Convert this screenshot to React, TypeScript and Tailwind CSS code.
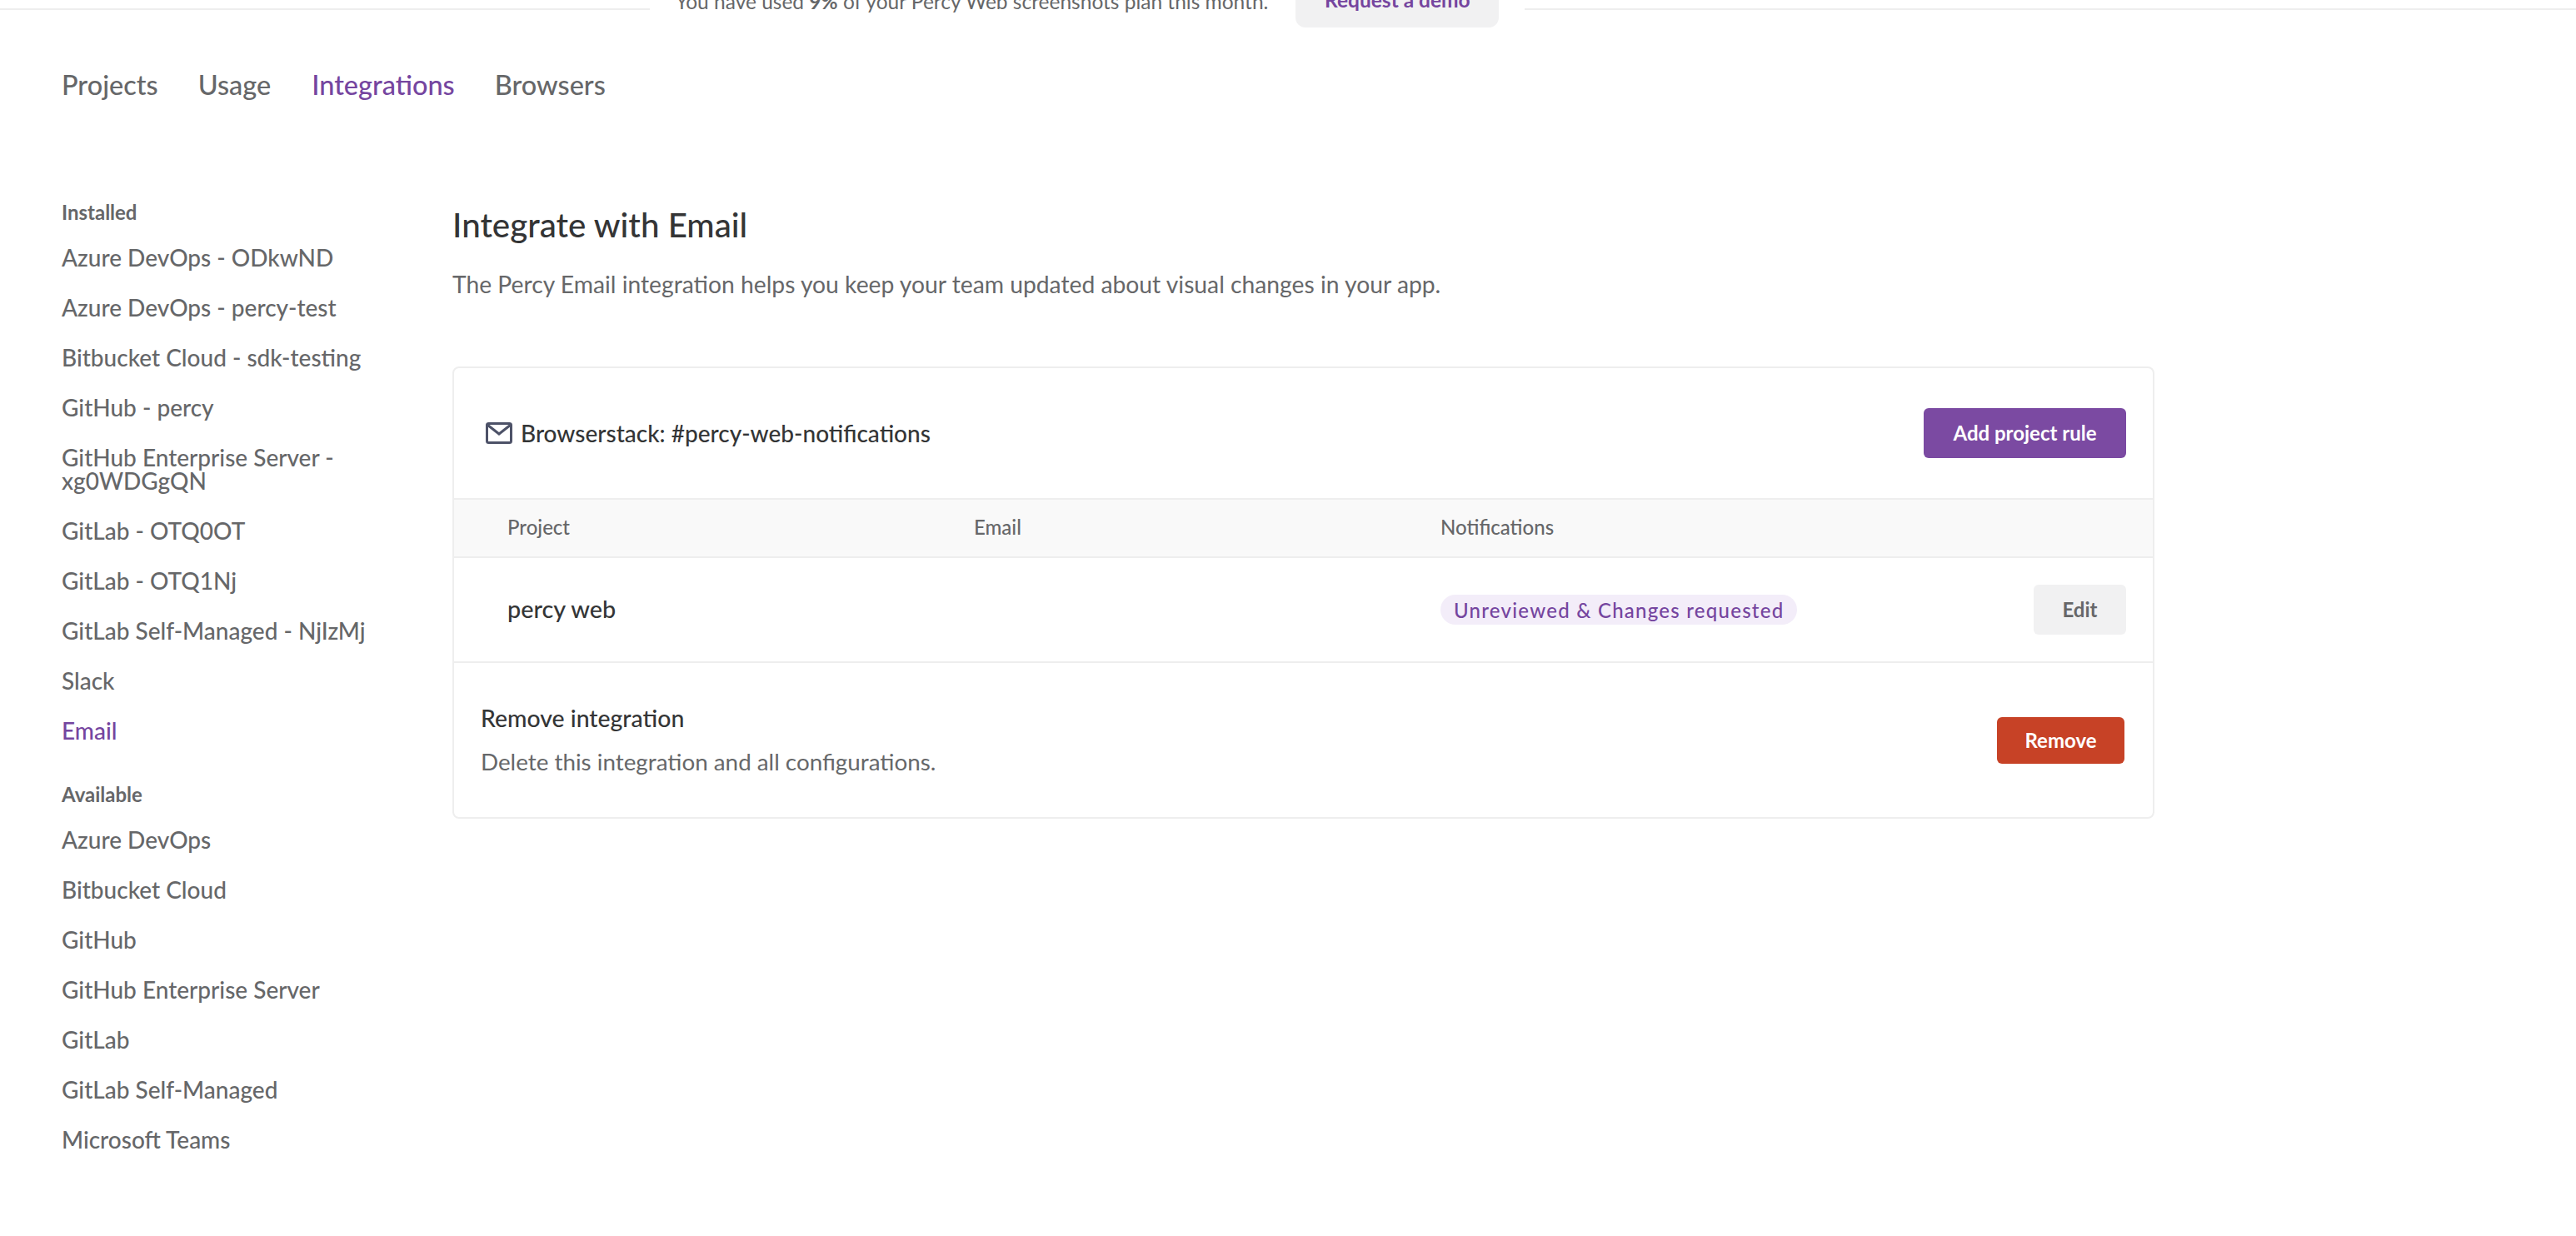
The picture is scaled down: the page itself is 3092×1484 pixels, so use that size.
const installed = [
  'Azure DevOps - ODkwND',
  'Azure DevOps - percy-test',
  'Bitbucket Cloud - sdk-testing',
  'GitHub - percy',
  'GitHub Enterprise Server - xg0WDGgQN',
  'GitLab - OTQ0OT',
  'GitLab - OTQ1Nj',
  'GitLab Self-Managed - NjIzMj',
  'Slack',
  'Email',
];

const available = [
  'Azure DevOps',
  'Bitbucket Cloud',
  'GitHub',
  'GitHub Enterprise Server',
  'GitLab',
  'GitLab Self-Managed',
  'Microsoft Teams',
];

const tabs = ['Projects', 'Usage', 'Integrations', 'Browsers'];

function SideLink({ label }: { label: string }) {
  const active = label === 'Email';
  return (
    <a className={`block py-[16px] text-[28px] leading-[28px] font-medium ${active ? 'text-[#75459f]' : 'text-[#666769]'}`}>
      {label}
    </a>
  );
}

function MailIcon() {
  return (
    <svg viewBox="0 0 32 26" className="h-[26px] w-[32px] shrink-0" fill="none" stroke="#4d5268" strokeWidth="3">
      <rect x="1.5" y="1.5" width="29" height="23" rx="2" />
      <path d="M2 3l14 11L30 3" />
    </svg>
  );
}

export default function App() {
  return (
    <div className="relative h-[1484px] w-[3092px] overflow-hidden bg-white font-['Lato','Liberation_Sans',sans-serif]">
      <div className="mt-[10px] h-[2px] bg-[#eeeeee]" />

      {/* usage banner, cut by the top of the window */}
      <div className="absolute left-[780px] top-[-20px] flex h-[53px] w-[1050px] items-start justify-center gap-[33px] bg-white">
        <p className="mt-[6px] text-[24.5px] leading-[32px] text-[#666769]">
          You have used <b className="font-bold">9%</b> of your Percy Web screenshots plan this month.
        </p>
        <button className="h-[53px] w-[244px] rounded-[12px] bg-[#f1f1f2] pb-[13px] text-[24.5px] leading-[32px] font-bold text-[#75459f]">
          Request a demo
        </button>
      </div>

      <nav className="mt-[70px] flex pl-[74px] text-[32.5px] leading-[40px] font-medium text-[#666769]">
        {tabs.map((t) => (
          <a key={t} className={t === 'Integrations' ? 'mr-[48px] ml-[1px] text-[#75459f]' : 'mr-[48px]'}>
            {t}
          </a>
        ))}
      </nav>

      <div className="mt-[121px] flex pl-[74px]">
        <aside className="w-[469px] shrink-0">
          <h4 className="mb-[12px] text-[24px] leading-[24px] font-bold text-[#666769]">Installed</h4>
          <div className="w-[380px]">
            {installed.map((l) => (
              <SideLink key={l} label={l} />
            ))}
          </div>
          <h4 className="mt-[35px] mb-[12px] text-[24px] leading-[24px] font-bold text-[#666769]">Available</h4>
          <div className="w-[380px]">
            {available.map((l) => (
              <SideLink key={l} label={l} />
            ))}
          </div>
        </aside>

        <main className="w-[2043px] pt-[2px]">
          <h1 className="text-[40.3px] leading-[50px] font-medium text-[#343536]">Integrate with Email</h1>
          <p className="mt-[28px] text-[28.25px] leading-[36px] text-[#666769]">
            The Percy Email integration helps you keep your team updated about visual changes in your app.
          </p>

          <section className="mt-[81px] rounded-[8px] border-2 border-[#eeeeee]">
            <header className="flex h-[156px] items-center justify-between pr-[32px] pl-[38px]">
              <div className="flex items-center gap-[10px] text-[28px] font-medium text-[#343536]">
                <MailIcon />
                Browserstack: #percy-web-notifications
              </div>
              <button className="h-[60px] w-[243px] rounded-[6px] bg-[#7b4aa2] text-[24px] font-bold text-white">
                Add project rule
              </button>
            </header>

            <div className="grid h-[72px] grid-cols-[560px_560px_1fr] items-center border-y-2 border-[#eeeeee] bg-[#f9f9f9] pb-[2px] pl-[64px] text-[24px] font-medium text-[#666769]">
              <span>Project</span>
              <span>Email</span>
              <span>Notifications</span>
            </div>

            <div className="grid h-[126px] grid-cols-[560px_560px_1fr] items-center border-b-2 border-[#eeeeee] pr-[32px] pl-[64px]">
              <span className="text-[28.8px] font-medium text-[#343536]">percy web</span>
              <span />
              <div className="flex items-center justify-between">
                <span className="flex h-[36px] items-center rounded-full bg-[#f3edf9] px-[16px] pt-[2px] text-[24px] font-medium tracking-[1.25px] text-[#75459f]">
                  Unreviewed &amp; Changes requested
                </span>
                <button className="h-[60px] w-[111px] rounded-[6px] bg-[#f1f1f2] text-[24px] font-bold text-[#666769]">
                  Edit
                </button>
              </div>
            </div>

            <div className="flex h-[185px] items-center justify-between pr-[34px] pl-[32px]">
              <div>
                <h3 className="text-[28.4px] leading-[36px] font-medium text-[#343536]">Remove integration</h3>
                <p className="mt-[17px] text-[27.8px] leading-[36px] text-[#666769]">Delete this integration and all configurations.</p>
              </div>
              <button className="h-[56px] w-[153px] rounded-[6px] bg-[#c74226] text-[24px] font-bold text-white">
                Remove
              </button>
            </div>
          </section>
        </main>
      </div>
    </div>
  );
}
